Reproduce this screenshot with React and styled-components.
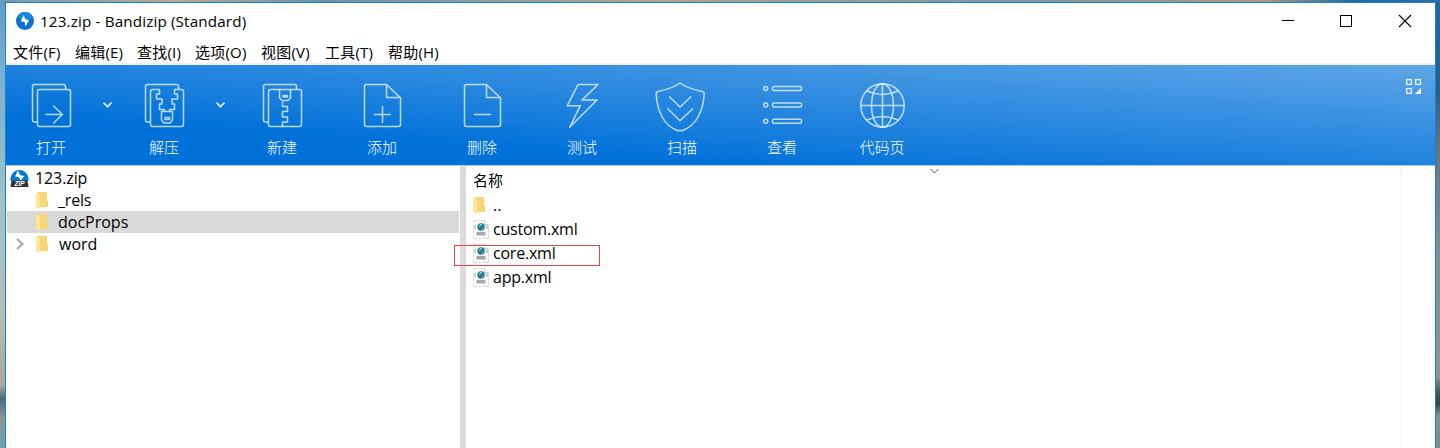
import React from 'react';
import styled, { createGlobalStyle } from 'styled-components';

const Global = createGlobalStyle`
  *, *::before, *::after { box-sizing: border-box; }
  body { margin: 0; overflow: hidden; font-family: "Open Sans", "Noto Sans CJK SC", sans-serif; color: #000; }
  svg { display: block; flex: none; overflow: visible; }
`;

const Desktop = styled.div`
  height: 448px;
  padding: 2px 4px 0 5px;
  background:
    linear-gradient(90deg, #6f9cb8, #b3ac98 12%, #6d93ab 22%, #a9a795 45%, #7d97a5 70%, #a39a88 88%, #1f6a9e 94%, #2a6f9f) 0 0 / 100% 2px no-repeat,
    linear-gradient(#2169a0, #245f8c 20%, #60757f 32%, #7b8f93 55%, #8f968c 84%, #4f5f62 87%, #33443d 90%, #87968f 93%, #7a8b86) 100% 0 / 4px 100% no-repeat,
    linear-gradient(#5f9dc8, #79aecf 15%, #9cc3c9 45%, #b5c0b4 70%, #aaa79a 86%, #4f6a7c 89%, #8a9594 93%, #72a3ad) 0 0 / 5px 100% no-repeat;
`;

const Window = styled.main`
  position: relative;
  height: 446px;
  display: flex;
  flex-direction: column;
  background: #fff;
  border: 1px solid #1b7fd4;
  border-bottom: 0;
`;

const TitleBar = styled.header`
  height: 37px;
  display: flex;
  align-items: center;
  padding: 0 1px 1px 10px;
`;

const Title = styled.h1`
  flex: 1;
  margin: 0 0 0 6px;
  font-size: 15.2px;
  font-weight: 400;
  line-height: 20px;
  letter-spacing: 0.16px;
`;

const WindowButton = styled.button`
  width: 58.5px;
  height: 34px;
  padding: 0;
  border: 0;
  background: none;
  display: flex;
  align-items: center;
  justify-content: center;
`;

const MenuBar = styled.nav`
  height: 25px;
  display: flex;
  padding-left: 7px;
  border-bottom: 2px solid #f0f0f0;
`;

const MenuItem = styled.span`
  width: ${(p) => p.$width}px;
  font-size: 15px;
  line-height: 24px;
  white-space: nowrap;
  letter-spacing: 0.2px;
`;

const Toolbar = styled.div`
  height: 101px;
  display: flex;
  color: #fff;
  border-bottom: 1px solid #b4cadf;
  background: linear-gradient(4deg, #0071d9 25%, #5fa6e6 100%);
`;

const Tool = styled.button`
  width: ${(p) => p.$width}px;
  padding: 15px 0 0;
  border: 0;
  background: none;
  color: inherit;
  font: inherit;
  display: flex;
  flex-direction: column;
  align-items: center;
`;

const ToolLabel = styled.span`
  margin-top: 5px;
  font-size: 15px;
  font-weight: 300;
  line-height: 20px;
`;

const DropArrow = styled.button`
  width: 23px;
  padding: 37px 0 0;
  border: 0;
  background: none;
  color: inherit;
  display: flex;
  justify-content: center;
  align-items: flex-start;
`;

const ViewMode = styled.div`
  margin: 14px 14px 0 auto;
`;

const Body = styled.div`
  flex: 1;
  display: flex;
  min-height: 0;
`;

const Tree = styled.div`
  width: 453px;
  padding: 1px 0 0 1px;
`;

const TreeRow = styled.div`
  height: 22px;
  display: flex;
  align-items: center;
  padding-left: ${(p) => p.$indent}px;
  gap: ${(p) => p.$gap}px;
  background: ${(p) => (p.$selected ? '#d9d9d9' : 'transparent')};
`;

const Name = styled.span`
  font-size: 16px;
  line-height: 22px;
  letter-spacing: ${(p) => p.$spacing || 0}px;
`;

const Splitter = styled.div`
  width: 7px;
  background: linear-gradient(90deg, #fff 1px, #dcdcdc 1px);
`;

const FileList = styled.section`
  width: 936px;
  border-right: 1px solid #ebf2f8;
  padding-left: 7px;
`;

const ListHeader = styled.div`
  height: 27px;
  display: flex;
  font-size: 15px;
  line-height: 28px;
`;

const SortMark = styled.div`
  margin: 3px 0 0 427px;
`;

const FileRow = styled.div`
  height: 24px;
  display: flex;
  align-items: center;
`;

const FileIcon = styled.span`
  width: 20px;
  flex: none;
`;

const HighlightBox = styled.div`
  position: absolute;
  left: 448px;
  top: 242px;
  width: 146px;
  height: 21px;
  border: 1px solid #ee4444;
`;

const Glyph = ({ children }) => (
  <svg width="52" height="52" viewBox="0 0 52 52" fill="none" stroke="#e6f3ff" strokeOpacity="0.8" strokeWidth="1.5" strokeLinejoin="round" strokeLinecap="round">
    {children}
  </svg>
);

const BackSheet = () => <path d="M12 42H9.5a2 2 0 0 1-2-2V6.500a2 2 0 0 1 2-2h29a2 2 0 0 1 2 2V9" />;
const Page = () => <path d="M30.500 4.500h-20a2 2 0 0 0-2 2v38a2 2 0 0 0 2 2h32a2 2 0 0 0 2-2V18L30.500 4.500V17.500h14" />;

const icons = {
  open: <><BackSheet /><rect x="12.500" y="9.500" width="33" height="37" rx="2" /><path d="M21 34.500h16.500M28.700 26l8.800 8.500L28.700 43" /></>,
  extract: (
    <>
      <BackSheet />
      <path d="M26.500 31V29.500h-5v-5.500h2.500v-5h-5.500v-5h3V9.500h-7a2 2 0 0 0-2 2v33a2 2 0 0 0 2 2h29a2 2 0 0 0 2-2v-33a2 2 0 0 0-2-2h-7v4.500h3v5h-5.500v5h2.500v5.500h-5V31" />
      <path d="M23.500 31.500h11V40l-2.500 3h-6l-2.500-3z" /><rect x="27" y="37.500" width="4.500" height="2" />
    </>
  ),
  create: (
    <>
      <BackSheet /><rect x="12.500" y="9.500" width="33" height="37" rx="2" />
      <path d="M23.500 9.500v8.500l2.500 2.500h6l2.500-2.500V9.500M26.500 22.500v4h5v5h-5v5.500h5v5h-5v4.500" /><rect x="27" y="15.500" width="4.500" height="1.600" />
    </>
  ),
  add: <><Page /><path d="M18.500 34.500h16M26.500 26.500v16" /></>,
  remove: <><Page /><path d="M18.500 34.500h16" /></>,
  test: <path d="M22 4.500h20L26 20h15L13.700 47.300 24.300 25.700H11.300z" />,
  scan: <><path d="M24 3C18 7.500 9 10 2 11.500Q0 12 .2 14C1 31 8 45 20 50q4 1.600 8 0C40 45 47.300 31 48.200 14q.1-2-1.800-2.500C39 10 30 7.500 24 3z" /><path d="M13.700 17L24 27l10.700-10M11.700 28.700l12.300 12 12.700-12" /></>,
  view: [8.6, 25, 41.3].map((y) => <g key={y}><circle cx="9.700" cy={y} r="2" /><rect x="16.500" y={y - 2} width="29" height="4" rx="1.500" /></g>),
  codepage: <><circle cx="26.500" cy="25.500" r="21.700" /><ellipse cx="26.500" cy="25.500" rx="11" ry="21.700" /><path d="M26.500 4v43M5 25.500h43M11 11q15.500 7 31 0M11 40q15.500-7 31 0" /></>,
};

const AppIcon = () => (
  <svg width="18" height="18" viewBox="0 0 18 18">
    <circle cx="9" cy="9" r="9" fill="#0d6fd1" /><path d="M1 5a9 9 0 0 1 16 0L9 9z" fill="#1688df" />
    <path d="M7.800 3L4.800 9.200l3.800.7.900 4.600 3.600-6.300-3.900-.9z" fill="#fff" />
  </svg>
);

const ArchiveIcon = () => (
  <svg width="19" height="19" viewBox="0 0 19 19">
    <path d="M.7 12a9 9 0 1 1 17.600 0z" fill="#0878d5" />
    <path d="M8 1.500L5 7.500l4.200.8 1 3.700L14.200 7 10 6z" fill="#fff" />
    <path d="M1.500 11.500h16l1 6.500H.5z" fill="#303438" />
    <text x="9.600" y="17.200" textAnchor="middle" fontFamily="Liberation Sans, sans-serif" fontSize="6.500" fontWeight="700" fontStyle="italic" fill="#fff">ZIP</text>
  </svg>
);

const FolderIcon = () => (
  <svg width="12" height="17" viewBox="0 0 12 17">
    <path d="M2 0h6.500v8l3.500 1v6H2z" fill="#efc75d" /><path d="M4 0h7v10H4z" fill="#f6d675" />
    <path d="M0 0l4 1.500V17L0 15z" fill="#ffe69b" /><path d="M4 2v13h7.500V9L9 8z" fill="#f8d775" />
  </svg>
);

const XmlIcon = () => (
  <svg width="16" height="19" viewBox="0 0 16 19">
    <path d="M.5.5h11l4 4v14H.5z" fill="#fafafa" stroke="#dedede" /><path d="M11.500.5v4h4" fill="#fff" stroke="#c5c5c5" />
    <path d="M3 5.500L1.300 7.200 3 9M13 5.500l1.700 1.700L13 9" fill="none" stroke="#929bad" />
    <circle cx="8" cy="7" r="3.700" fill="#1e6fba" /><path d="M5.500 4.800l3-1 .5 2-2 2-2-1zM8.500 8l2.500-1-.7 2.500-1.500.8z" fill="#48ad57" />
    <path d="M7 4h2v1H7z" fill="#9bdcf0" /><path d="M3.500 12h9v3.500h-9z" fill="#a5a7b3" />
  </svg>
);

const Chevron = () => (
  <svg width="9" height="6" viewBox="0 0 9 6" fill="none" stroke="#d4e8fa" strokeWidth="1.800"><path d="M.5.7l4 4 4-4" /></svg>
);

const menus = [['文件(F)', 62], ['编辑(E)', 62], ['查找(I)', 58], ['选项(O)', 66], ['视图(V)', 64], ['工具(T)', 63], ['帮助(H)', 60]];
const tools = [
  ['open', '打开', true], ['extract', '解压', true], ['create', '新建'], ['add', '添加'], ['remove', '删除'],
  ['test', '测试'], ['scan', '扫描'], ['view', '查看'], ['codepage', '代码页'],
];

export default function App() {
  return (
    <Desktop>
      <Global />
      <Window>
        <TitleBar>
          <AppIcon />
          <Title>123.zip - Bandizip (Standard)</Title>
          <WindowButton aria-label="Minimize"><svg width="12" height="12"><path d="M0 5.500h12" stroke="#000" /></svg></WindowButton>
          <WindowButton aria-label="Maximize"><svg width="12" height="12"><rect x=".5" y=".5" width="11" height="11" fill="none" stroke="#000" /></svg></WindowButton>
          <WindowButton aria-label="Close"><svg width="12" height="12"><path d="M0 0l12 12M12 0L0 12" stroke="#000" strokeWidth="1.100" /></svg></WindowButton>
        </TitleBar>
        <MenuBar>{menus.map(([label, width]) => <MenuItem key={label} $width={width}>{label}</MenuItem>)}</MenuBar>
        <Toolbar>
          {tools.map(([icon, label, drop]) => (
            <React.Fragment key={icon}>
              <Tool $width={drop ? 90 : 100}><Glyph>{icons[icon]}</Glyph><ToolLabel>{label}</ToolLabel></Tool>
              {drop && <DropArrow aria-label={label}><Chevron /></DropArrow>}
            </React.Fragment>
          ))}
          <ViewMode>
            <svg width="15" height="15" fill="none" stroke="#e9f4fd" strokeWidth="1.300">
              <rect x=".6" y=".6" width="4.800" height="4.800" /><rect x="9.600" y=".6" width="4.800" height="4.800" /><rect x=".6" y="9.600" width="4.800" height="4.800" />
              <path d="M15 9v6H9z" fill="#fff" stroke="none" />
            </svg>
          </ViewMode>
        </Toolbar>
        <Body>
          <Tree>
            <TreeRow $indent={3} $gap={6}><ArchiveIcon /><Name $spacing={-0.1}>123.zip</Name></TreeRow>
            <TreeRow $indent={29} $gap={10}><FolderIcon /><Name $spacing={-0.2}>_rels</Name></TreeRow>
            <TreeRow $indent={29} $gap={10} $selected><FolderIcon /><Name>docProps</Name></TreeRow>
            <TreeRow $indent={9} $gap={11}>
              <svg width="9" height="12" fill="none" stroke="#a6a6a6" strokeWidth="2"><path d="M1 1l5.500 5L1 11" /></svg>
              <FolderIcon /><Name>word</Name>
            </TreeRow>
          </Tree>
          <Splitter />
          <FileList>
            <ListHeader>
              <span>名称</span>
              <SortMark><svg width="9" height="5" fill="none" stroke="#555"><path d="M.5 0l4 4 4-4" /></svg></SortMark>
            </ListHeader>
            <FileRow><FileIcon><FolderIcon /></FileIcon><Name>..</Name></FileRow>
            {['custom.xml', 'core.xml', 'app.xml'].map((name) => (
              <FileRow key={name}><FileIcon><XmlIcon /></FileIcon><Name $spacing={-0.22}>{name}</Name></FileRow>
            ))}
          </FileList>
        </Body>
        <HighlightBox />
      </Window>
    </Desktop>
  );
}
